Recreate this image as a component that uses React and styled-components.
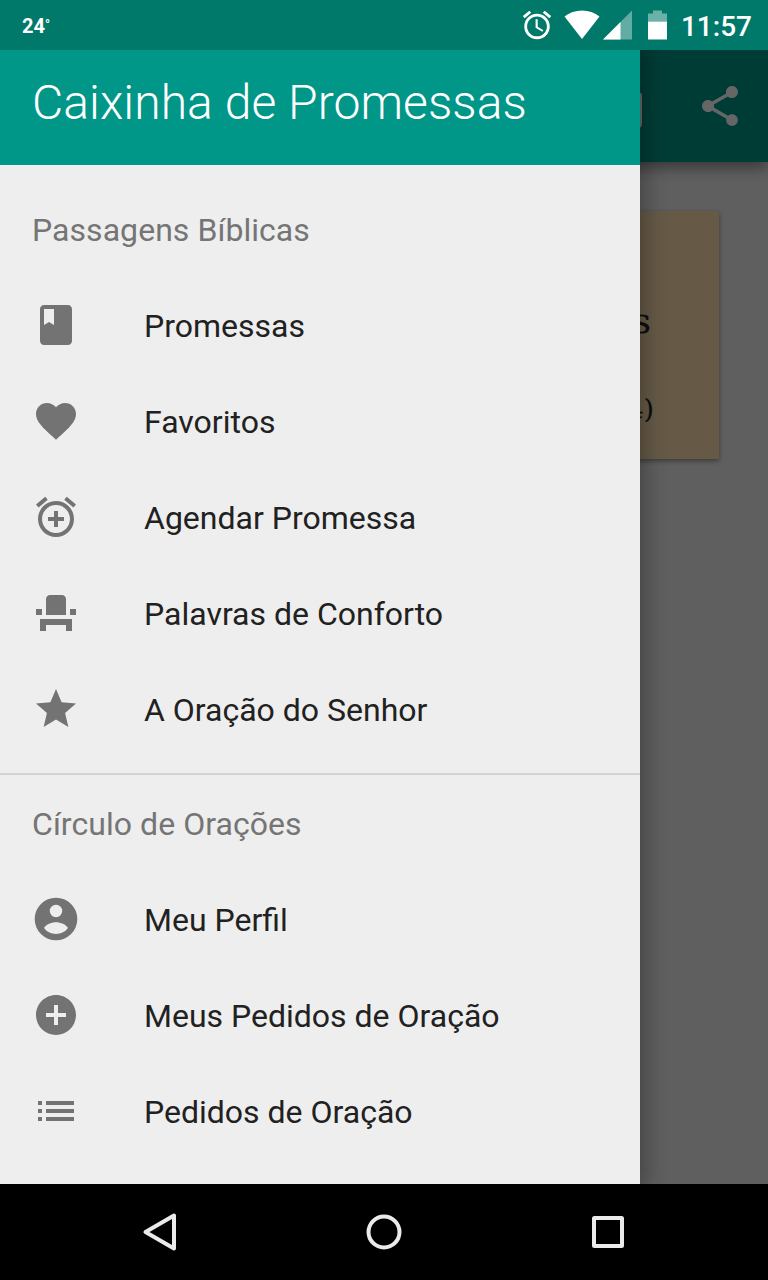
import React from "react";
import styled, { createGlobalStyle } from "styled-components";
import {
  MdAccessAlarm,
  MdAddAlarm,
  MdAddCircle,
  MdClass,
  MdEventSeat,
  MdFavorite,
  MdList,
  MdShare,
  MdStar,
} from "react-icons/md";

const ProfileIcon = ({ size }) => (
  <svg width={size} height={size} viewBox="0 0 48 48" fill="currentColor">
    <path
      fillRule="evenodd"
      d="M24 2.7a21.3 21.3 0 1 0 0 42.6a21.3 21.3 0 1 0 0-42.6Z M24 9.8a6.2 6.2 0 1 1 0 12.4a6.2 6.2 0 1 1 0-12.4Z M12 32.8c2.4-3.4 7-5.6 12-5.6s9.6 2.2 12 5.6c-2.5 4-7 6.2-12 6.2s-9.5-2.2-12-6.2Z"
    />
  </svg>
);

const sections = [
  {
    title: "Passagens Bíblicas",
    items: [
      { label: "Promessas", icon: MdClass },
      { label: "Favoritos", icon: MdFavorite },
      { label: "Agendar Promessa", icon: MdAddAlarm },
      { label: "Palavras de Conforto", icon: MdEventSeat },
      { label: "A Oração do Senhor", icon: MdStar },
    ],
  },
  {
    title: "Círculo de Orações",
    items: [
      { label: "Meu Perfil", icon: ProfileIcon },
      { label: "Meus Pedidos de Oração", icon: MdAddCircle },
      { label: "Pedidos de Oração", icon: MdList },
    ],
  },
];

const StatusIcons = () => (
  <>
    <AlarmIcon />
    <svg width="36" height="30" viewBox="0 0 36 30">
      <path d="M0.5 6.5 C10 -1.5 26 -1.5 35.5 6.5 L18 29 Z" fill="#fff" />
    </svg>
    <SignalIcon width="30" height="30" viewBox="0 0 30 30">
      <path d="M0 29.5 L29 0.5 V29.5 Z" fill="#fff" opacity="0.38" />
      <path d="M0 29.5 L17.5 12 V29.5 Z" fill="#fff" />
    </SignalIcon>
    <BatteryIcon width="19" height="30" viewBox="0 0 19 30">
      <path d="M0 3.5 H5 V0.5 H14 V3.5 H19 V11.5 H0 Z" fill="#fff" opacity="0.42" />
      <path d="M0 11.5 H19 V29.5 H0 Z" fill="#fff" />
    </BatteryIcon>
  </>
);

const App = () => {
  return (
    <Screen>
      <GlobalStyle />
      <StatusBar>
        <Temperature>
          24<sup>°</sup>
        </Temperature>
        <StatusIcons />
        <Clock>11:57</Clock>
      </StatusBar>
      <Main>
        <Page>
          <Toolbar>
            <CopyOutline />
            <MdShare size={48} />
          </Toolbar>
          <Card>
            <Verse>s</Verse>
            <Reference>4)</Reference>
          </Card>
        </Page>
        <Scrim />
        <Drawer>
          <DrawerHeader>Caixinha de Promessas</DrawerHeader>
          {sections.map(({ title, items }) => (
            <Section key={title}>
              <SectionTitle>{title}</SectionTitle>
              {items.map(({ label, icon: Icon }) => (
                <Item key={label}>
                  <Icon size={48} />
                  <span>{label}</span>
                </Item>
              ))}
            </Section>
          ))}
        </Drawer>
      </Main>
      <NavBar>
        <svg width="48" height="48" viewBox="0 0 48 48">
          <path d="M38 7.5 V40.5 L9.5 24 Z" />
        </svg>
        <svg width="48" height="48" viewBox="0 0 48 48">
          <circle cx="24" cy="24" r="15.5" />
        </svg>
        <svg width="48" height="48" viewBox="0 0 48 48">
          <rect x="10" y="10" width="28" height="28" rx="0.5" />
        </svg>
      </NavBar>
    </Screen>
  );
};

const GlobalStyle = createGlobalStyle`
  * {
    box-sizing: border-box;
  }
  body {
    margin: 0;
    font-family: Roboto, sans-serif;
  }
  svg {
    display: block;
    flex-shrink: 0;
  }
`;

const Screen = styled.div`
  display: flex;
  flex-direction: column;
  width: 768px;
  height: 1280px;
  overflow: hidden;
`;

const StatusBar = styled.div`
  display: flex;
  align-items: center;
  height: 50px;
  padding: 0 16px 0 22px;
  background: #00796b;
  color: #fff;
`;

const Temperature = styled.div`
  flex: 1;
  font-size: 20px;
  font-weight: 700;
  line-height: 24px;
  padding-top: 2px;
  sup {
    font-size: 13px;
    line-height: 0;
    vertical-align: 4px;
  }
`;

const AlarmIcon = styled(MdAccessAlarm)`
  width: 34px;
  height: 34px;
  margin-right: 10px;
`;

const SignalIcon = styled.svg`
  margin-left: 3px;
`;

const BatteryIcon = styled.svg`
  margin-left: 15px;
`;

const Clock = styled.div`
  margin-left: 14px;
  padding-top: 3px;
  font-size: 28px;
  font-weight: 500;
  line-height: 32px;
`;

const Main = styled.div`
  position: relative;
  flex: 1;
  overflow: hidden;
`;

const Page = styled.div`
  height: 100%;
  background: #eee;
`;

const Toolbar = styled.div`
  display: flex;
  align-items: center;
  justify-content: flex-end;
  gap: 54px;
  height: 112px;
  padding-right: 24px;
  background: #009688;
  box-shadow: 0 6px 14px rgba(0, 0, 0, 0.4);
  color: #fff;
`;

const CopyOutline = styled.div`
  width: 30px;
  height: 36px;
  margin-top: 8px;
  border: 4px solid #fff;
  border-radius: 4px;
`;

const Card = styled.div`
  display: flex;
  flex-direction: column;
  align-items: flex-end;
  height: 248px;
  margin: 49px 49px 0;
  padding-top: 90px;
  background: #ffe0b2;
  box-shadow: 0 2px 5px rgba(0, 0, 0, 0.4);
  color: #222;
  font-family: "DejaVu Serif", serif;
  -webkit-text-stroke: 0.2px #222;
`;

const Verse = styled.div`
  padding-right: 68px;
  font-size: 36px;
  line-height: 40px;
`;

const Reference = styled.div`
  margin-top: 48px;
  padding-right: 65px;
  font-size: 26px;
  line-height: 40px;
`;

const Scrim = styled.div`
  position: absolute;
  inset: 0;
  background: rgba(0, 0, 0, 0.6);
`;

const Drawer = styled.div`
  position: absolute;
  top: 0;
  bottom: 0;
  left: 0;
  width: 640px;
  background: #eee;
  box-shadow: 0 0 20px 6px rgba(0, 0, 0, 0.28);
`;

const DrawerHeader = styled.div`
  height: 115px;
  padding: 23px 32px 0;
  background: #009688;
  color: #fff;
  font-size: 48px;
  font-weight: 300;
  line-height: 60px;
  letter-spacing: 0.07px;
`;

const Section = styled.div`
  padding: 17px 0 15px;
  & + & {
    padding-top: 1px;
    border-top: 2px solid #d4d4d4;
  }
`;

const SectionTitle = styled.div`
  height: 96px;
  padding-left: 32px;
  color: #757575;
  font-size: 32px;
  line-height: 96px;
  letter-spacing: 0.05px;
`;

const Item = styled.div`
  display: flex;
  align-items: center;
  gap: 64px;
  height: 96px;
  padding-left: 32px;
  color: #212121;
  font-size: 32px;
  svg {
    margin-bottom: 2px;
    color: #737373;
  }
`;

const NavBar = styled.div`
  display: flex;
  align-items: center;
  justify-content: center;
  gap: 176px;
  height: 96px;
  background: #000;
  svg {
    fill: none;
    stroke: #ebebeb;
    stroke-width: 4;
    stroke-linejoin: round;
  }
`;

export default App;
